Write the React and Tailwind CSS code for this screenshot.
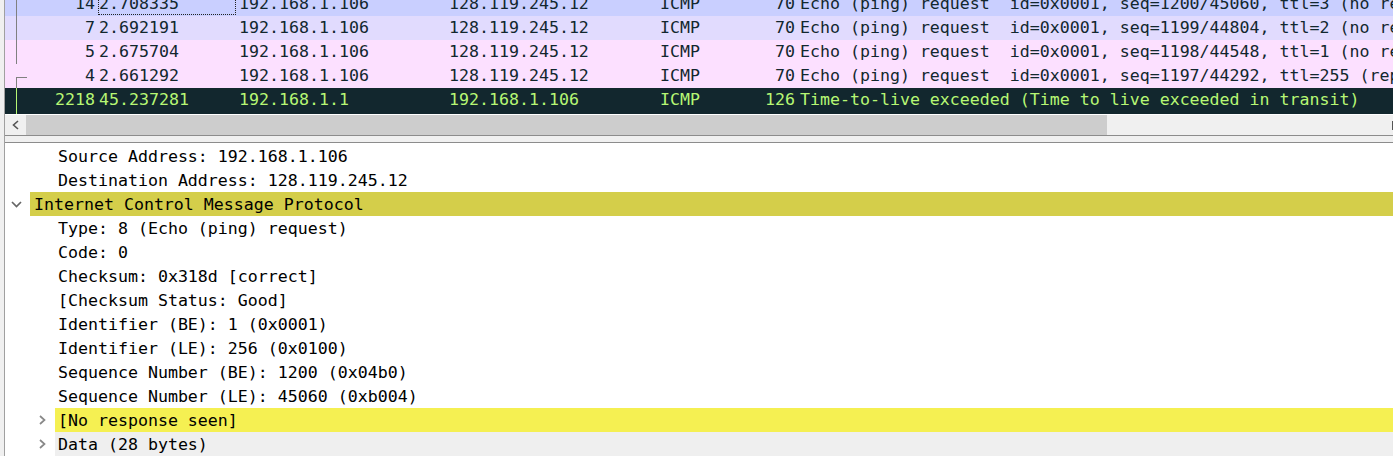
import React from "react";

const rows = [
  { no: "14", time: "2.708335", src: "192.168.1.106", dst: "128.119.245.12", proto: "ICMP", len: "70", info: "Echo (ping) request  id=0x0001, seq=1200/45060, ttl=3 (no response found!)", bg: "bg-[#c9cfff]", focus: true, tree: "line" },
  { no: "7", time: "2.692191", src: "192.168.1.106", dst: "128.119.245.12", proto: "ICMP", len: "70", info: "Echo (ping) request  id=0x0001, seq=1199/44804, ttl=2 (no response found!)", bg: "bg-[#e1dbfe]", tree: "line" },
  { no: "5", time: "2.675704", src: "192.168.1.106", dst: "128.119.245.12", proto: "ICMP", len: "70", info: "Echo (ping) request  id=0x0001, seq=1198/44548, ttl=1 (no response found!)", bg: "bg-[#fce0ff]", tree: "line" },
  { no: "4", time: "2.661292", src: "192.168.1.106", dst: "128.119.245.12", proto: "ICMP", len: "70", info: "Echo (ping) request  id=0x0001, seq=1197/44292, ttl=255 (reply in 6)", bg: "bg-[#fce0ff]", tree: "start" },
];

const details = [
  { text: "Source Address: 192.168.1.106", level: 1 },
  { text: "Destination Address: 128.119.245.12", level: 1 },
  { text: "Internet Control Message Protocol", level: 0, open: true, hl: "bg-[#d4ce4a]" },
  { text: "Type: 8 (Echo (ping) request)", level: 1 },
  { text: "Code: 0", level: 1 },
  { text: "Checksum: 0x318d [correct]", level: 1 },
  { text: "[Checksum Status: Good]", level: 1 },
  { text: "Identifier (BE): 1 (0x0001)", level: 1 },
  { text: "Identifier (LE): 256 (0x0100)", level: 1 },
  { text: "Sequence Number (BE): 1200 (0x04b0)", level: 1 },
  { text: "Sequence Number (LE): 45060 (0xb004)", level: 1 },
  { text: "[No response seen]", level: 1, closed: true, hl: "bg-[#f5f052]" },
  { text: "Data (28 bytes)", level: 1, closed: true, hl: "bg-[#efefef]" },
];

function ChevronDown() {
  return (
    <svg width="11" height="7" viewBox="0 0 11 7" className="block">
      <path d="M1 1 L5.5 5.5 L10 1" fill="none" stroke="#666" strokeWidth="1.7" />
    </svg>
  );
}

function ChevronRight({ color = "#888" }) {
  return (
    <svg width="7" height="10" viewBox="0 0 7 10" className="block">
      <path d="M1 1 L5.5 5 L1 9" fill="none" stroke={color} strokeWidth="1.7" />
    </svg>
  );
}

function PacketRow({ r }) {
  return (
    <div className={`flex h-[24px] leading-[24px] text-[#12272e] ${r.bg}`}>
      <div className="relative w-[90px] text-right shrink-0">
        {r.tree === "line" && <div className="absolute left-[11px] top-0 bottom-0 w-px bg-[#808080]" />}
        {r.tree === "start" && (
          <>
            <div className="absolute left-[11px] top-[13px] w-[11px] h-px bg-[#808080]" />
            <div className="absolute left-[11px] top-[13px] bottom-0 w-px bg-[#808080]" />
          </>
        )}
        {r.no}
      </div>
      <div className="relative w-[144px] pl-[4px] shrink-0">
        {r.focus && <div className="absolute left-[3px] right-[3px] top-[-2px] bottom-[1px] border border-dotted border-[#222]" />}
        {r.time}
      </div>
      <div className="w-[210px] shrink-0">{r.src}</div>
      <div className="w-[211px] shrink-0">{r.dst}</div>
      <div className="w-[100px] shrink-0">{r.proto}</div>
      <div className="w-[35px] text-right shrink-0">{r.len}</div>
      <div className="pl-[5px] whitespace-pre">{r.info}</div>
    </div>
  );
}

export default function App() {
  return (
    <div
      className="w-[1393px] h-[456px] overflow-hidden flex bg-[#f0f0f0] text-[16.6px]"
      style={{ fontFamily: '"DejaVu Sans Mono", "Liberation Mono", monospace' }}
    >
      <div className="w-[4px] shrink-0 bg-[#f0f0f0]" />
      <div className="flex-1 flex flex-col border-l border-[#a0a0a0] min-w-0">
        {/* packet list */}
        <div className="h-[115px] bg-white overflow-hidden shrink-0">
          <div className="mt-[-8px]">
            {rows.map((r) => (
              <PacketRow key={r.no} r={r} />
            ))}
            <div className="flex h-[26px] leading-[24px] bg-[#12272e] text-[#b7f774]">
              <div className="relative w-[90px] text-right shrink-0">
                <div className="absolute left-[11px] top-0 bottom-0 w-px bg-[#b7f774]" />
                2218
              </div>
              <div className="w-[144px] pl-[4px] shrink-0">45.237281</div>
              <div className="w-[210px] shrink-0">192.168.1.1</div>
              <div className="w-[211px] shrink-0">192.168.1.106</div>
              <div className="w-[100px] shrink-0">ICMP</div>
              <div className="w-[35px] text-right shrink-0">126</div>
              <div className="pl-[5px] whitespace-pre">Time-to-live exceeded (Time to live exceeded in transit)</div>
            </div>
          </div>
        </div>

        {/* horizontal scrollbar */}
        <div className="h-[21px] flex shrink-0 border-b border-[#8c8c8c]">
          <div className="w-[21px] bg-[#f0f0f0] flex items-center justify-center">
            <svg width="7" height="10" viewBox="0 0 7 10" className="block">
              <path d="M6 1 L1.5 5 L6 9" fill="none" stroke="#555" strokeWidth="1.6" />
            </svg>
          </div>
          <div className="w-[1081px] bg-[#cdcdcd]" />
          <div className="flex-1 bg-[#f0f0f0] flex justify-end items-center">
            <div className="w-px h-[9px] bg-[#555]" />
          </div>
        </div>

        {/* splitter */}
        <div className="h-[7px] shrink-0 bg-[#f0f0f0] border-b border-[#8c8c8c]" />

        {/* packet details */}
        <div className="flex-1 bg-white pt-[1px] text-black overflow-hidden">
          {details.map((d, i) => (
            <div key={i} className="flex h-[24px]">
              {d.level === 0 ? (
                <div className="w-[25px] shrink-0 flex items-center pl-[6px]">
                  <ChevronDown />
                </div>
              ) : (
                <div className="w-[50px] shrink-0 flex items-center pl-[34px]">
                  {d.closed && <ChevronRight />}
                </div>
              )}
              <div className={`flex-1 h-[24px] overflow-hidden whitespace-pre pt-[1px] leading-[24px] ${d.level === 0 ? "pl-[4px]" : "pl-[3px]"} ${d.hl || ""}`}>
                {d.text}
              </div>
            </div>
          ))}
        </div>
      </div>
    </div>
  );
}
